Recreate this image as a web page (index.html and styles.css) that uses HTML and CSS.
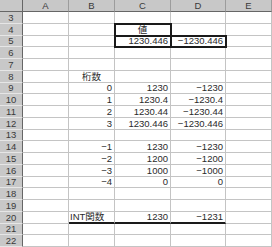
FILE: index.html
```html
<!DOCTYPE html>
<html lang="ja">
<head>
<meta charset="utf-8">
<link rel="stylesheet" href="styles.css">
</head>
<body>
<div class="sheet">
  <div class="hd corner"></div><div class="hd col">A</div><div class="hd col">B</div><div class="hd col">C</div><div class="hd col">D</div><div class="hd col">E</div>

  <div class="hd row">3</div><div class="c"></div><div class="c"></div><div class="c"></div><div class="c"></div><div class="c"></div>
  <div class="hd row">4</div><div class="c"></div><div class="c"></div><div class="c mid box">値</div><div class="c"></div><div class="c"></div>
  <div class="hd row">5</div><div class="c"></div><div class="c"></div><div class="c num box">1230.446</div><div class="c num box">−1230.446</div><div class="c"></div>
  <div class="hd row">6</div><div class="c"></div><div class="c"></div><div class="c"></div><div class="c"></div><div class="c"></div>
  <div class="hd row">7</div><div class="c"></div><div class="c"></div><div class="c"></div><div class="c"></div><div class="c"></div>
  <div class="hd row">8</div><div class="c"></div><div class="c mid">桁数</div><div class="c"></div><div class="c"></div><div class="c"></div>
  <div class="hd row">9</div><div class="c"></div><div class="c num">0</div><div class="c num">1230</div><div class="c num">−1230</div><div class="c"></div>
  <div class="hd row">10</div><div class="c"></div><div class="c num">1</div><div class="c num">1230.4</div><div class="c num">−1230.4</div><div class="c"></div>
  <div class="hd row">11</div><div class="c"></div><div class="c num">2</div><div class="c num">1230.44</div><div class="c num">−1230.44</div><div class="c"></div>
  <div class="hd row">12</div><div class="c"></div><div class="c num">3</div><div class="c num">1230.446</div><div class="c num">−1230.446</div><div class="c"></div>
  <div class="hd row">13</div><div class="c"></div><div class="c"></div><div class="c"></div><div class="c"></div><div class="c"></div>
  <div class="hd row">14</div><div class="c"></div><div class="c num">−1</div><div class="c num">1230</div><div class="c num">−1230</div><div class="c"></div>
  <div class="hd row">15</div><div class="c"></div><div class="c num">−2</div><div class="c num">1200</div><div class="c num">−1200</div><div class="c"></div>
  <div class="hd row">16</div><div class="c"></div><div class="c num">−3</div><div class="c num">1000</div><div class="c num">−1000</div><div class="c"></div>
  <div class="hd row">17</div><div class="c"></div><div class="c num">−4</div><div class="c num">0</div><div class="c num">0</div><div class="c"></div>
  <div class="hd row">18</div><div class="c"></div><div class="c"></div><div class="c"></div><div class="c"></div><div class="c"></div>
  <div class="hd row">19</div><div class="c"></div><div class="c"></div><div class="c"></div><div class="c"></div><div class="c"></div>
  <div class="hd row">20</div><div class="c"></div><div class="c txt ul">INT関数</div><div class="c num ul">1230</div><div class="c num ul">−1231</div><div class="c"></div>
  <div class="hd row">21</div><div class="c"></div><div class="c"></div><div class="c"></div><div class="c"></div><div class="c"></div>
  <div class="hd row">22</div><div class="c"></div><div class="c"></div><div class="c"></div><div class="c"></div><div class="c"></div>
</div>
</body>
</html>
```

FILE: styles.css
```css
html, body {
  margin: 0;
  padding: 0;
  background: #fff;
}
.sheet {
  display: grid;
  grid-template-columns: 23px 46px 46px 56px 55px 46px;
  grid-template-rows: 12px 12px 12px 11px 12px 12px 12px 11px 12px 12px 12px 11px 12px 12px 12px 11px 12px 12px 12px 11px 12px;
  width: 272px;
  height: 247px;
  overflow: hidden;
  font-family: "Liberation Sans", "Noto Sans CJK JP", sans-serif;
  font-size: 9.5px;
  color: #2a2a2a;
  background: #fff;
}
.sheet > div {
  box-sizing: border-box;
  display: flex;
  align-items: center;
  white-space: nowrap;
  line-height: 1;
  min-width: 0;
}
.hd {
  background: #c8c8c8;
  color: #3a3a3a;
  justify-content: center;
  border-right: 1px solid #9c9c9c;
  border-bottom: 1px solid #9c9c9c;
}
.hd.row {
  border-right: 1px solid #666;
  border-bottom: 1px solid #e6e6e6;
}
.hd.col {
  border-bottom: 1px solid #666;
}
.hd.corner {
  border-bottom: 1px solid #666;
  border-right: 1px solid #666;
}
.c {
  border-right: 1px solid #c4c4c4;
  border-bottom: 1px solid #c4c4c4;
}
.num {
  justify-content: flex-end;
  padding-right: 2px;
}
.mid {
  justify-content: center;
}
.txt {
  justify-content: flex-start;
  padding-left: 1px;
  overflow: visible;
}
.box {
  outline: 2px solid #1a1a1a;
  outline-offset: -1px;
  z-index: 1;
}
.ul {
  border-bottom: 2px solid #1a1a1a;
}
```
